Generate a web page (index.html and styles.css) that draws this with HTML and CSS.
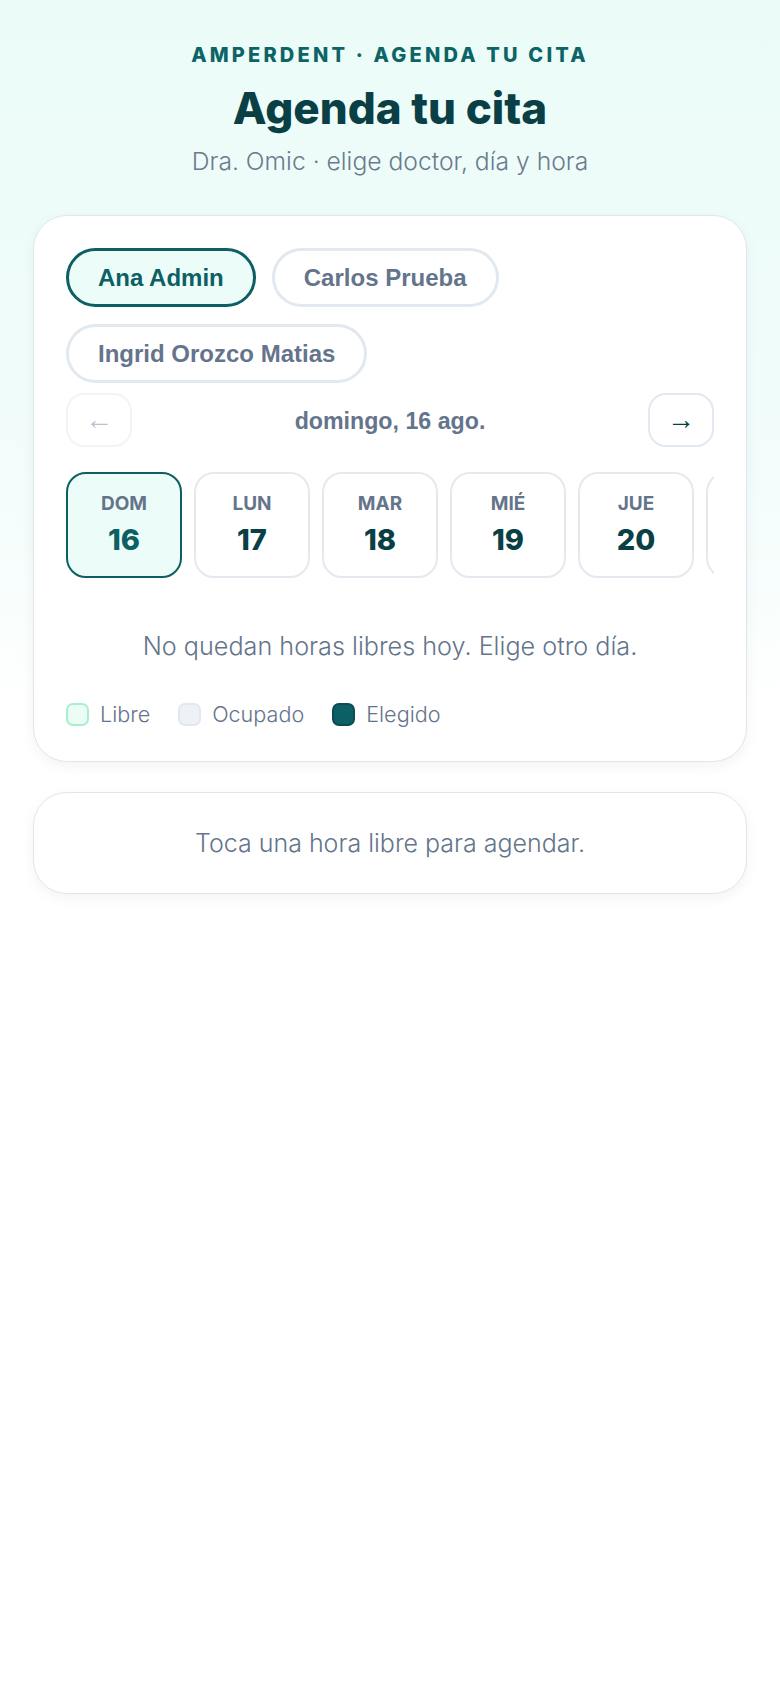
FILE: index.html
```html
<!DOCTYPE html>
<html lang="es">
<head>
<meta charset="utf-8">
<meta name="viewport" content="width=device-width, initial-scale=1">
<title>Agenda tu cita · Amperdent</title>
<link rel="stylesheet" href="styles.css">
</head>
<body>
<main class="page">
  <header class="hero">
    <p class="eyebrow">AMPERDENT · AGENDA TU CITA</p>
    <h1 class="title">Agenda tu cita</h1>
    <p class="subtitle">Dra. Omic · elige doctor, día y hora</p>
  </header>

  <section class="card booking">
    <div class="doctors">
      <button class="chip is-active" type="button">Ana Admin</button>
      <button class="chip" type="button">Carlos Prueba</button>
      <button class="chip" type="button">Ingrid Orozco Matias</button>
    </div>

    <div class="date-nav">
      <button class="nav-btn" type="button" disabled>←</button>
      <span class="date-label">domingo, 16 ago.</span>
      <button class="nav-btn nav-next" type="button">→</button>
    </div>

    <div class="days">
      <button class="day is-selected" type="button"><span class="day-name">DOM</span><span class="day-num">16</span></button>
      <button class="day" type="button"><span class="day-name">LUN</span><span class="day-num">17</span></button>
      <button class="day" type="button"><span class="day-name">MAR</span><span class="day-num">18</span></button>
      <button class="day" type="button"><span class="day-name">MIÉ</span><span class="day-num">19</span></button>
      <button class="day" type="button"><span class="day-name">JUE</span><span class="day-num">20</span></button>
      <button class="day" type="button"><span class="day-name">VIE</span><span class="day-num">21</span></button>
      <button class="day" type="button"><span class="day-name">SÁB</span><span class="day-num">22</span></button>
    </div>

    <p class="empty">No quedan horas libres hoy. Elige otro día.</p>

    <div class="legend">
      <span class="legend-item"><span class="swatch swatch-free"></span>Libre</span>
      <span class="legend-item"><span class="swatch swatch-busy"></span>Ocupado</span>
      <span class="legend-item"><span class="swatch swatch-picked"></span>Elegido</span>
    </div>
  </section>

  <section class="card hint">
    <p class="hint-text">Toca una hora libre para agendar.</p>
  </section>
</main>
</body>
</html>
```

FILE: styles.css
```css
* {
  box-sizing: border-box;
}

html,
body {
  margin: 0;
  padding: 0;
}

body {
  min-height: 100vh;
  background: linear-gradient(180deg, #ebfcf8 0%, #f3fdfb 30%, #ffffff 42%, #ffffff 100%);
  font-family: "Inter", "Noto Sans", sans-serif;
  color: #0b3d42;
}

.page {
  padding: 42px 33px 40px;
}

.hero {
  text-align: center;
}

.eyebrow {
  margin: 0;
  font-size: 20px;
  line-height: 26px;
  font-weight: 800;
  letter-spacing: 3.2px;
  color: #0d6466;
}

.title {
  margin: 15px 0 0;
  font-size: 44px;
  line-height: 50px;
  font-weight: 800;
  letter-spacing: 0;
  color: #093f45;
}

.subtitle {
  margin: 11px 0 0;
  font-size: 24.7px;
  line-height: 34px;
  font-weight: 300;
  color: #6b7a8d;
}

.card {
  background: #ffffff;
  border: 1px solid #e0e6ee;
  border-radius: 34px;
  box-shadow: 0 4px 14px rgba(15, 23, 42, 0.05);
}

.booking {
  margin-top: 37px;
  padding: 32px;
}

.doctors {
  display: flex;
  flex-wrap: wrap;
  gap: 17px 16px;
}

.chip {
  margin: 0;
  padding: 13px 29px;
  border: 3px solid #e2e8f0;
  border-radius: 999px;
  background: #ffffff;
  font-family: "Liberation Sans", Arial, sans-serif;
  font-size: 24px;
  line-height: 27px;
  font-weight: 700;
  color: #64748b;
}

.chip.is-active {
  border-color: #0d5f64;
  background: #ecfdf9;
  color: #0d5f64;
}

.date-nav {
  margin-top: 10px;
  display: flex;
  align-items: center;
  justify-content: space-between;
}

.nav-btn {
  width: 66px;
  height: 54px;
  padding: 0;
  border: 2px solid #e2e8f0;
  border-radius: 18px;
  background: #ffffff;
  font-family: "Liberation Sans", Arial, sans-serif;
  font-size: 28px;
  line-height: 1;
  color: #0b3d42;
}

.nav-btn:disabled {
  border-color: #f1f4f8;
  color: #b8c2cf;
}

.date-label {
  font-family: "Liberation Sans", Arial, sans-serif;
  font-size: 23.2px;
  font-weight: 700;
  color: #64748b;
  padding-top: 3px;
}

.days {
  margin-top: 25px;
  display: flex;
  gap: 12px;
  overflow: hidden;
}

.day {
  flex: 0 0 116px;
  display: flex;
  flex-direction: column;
  align-items: center;
  gap: 6px;
  margin: 0;
  padding: 18px 0;
  border: 2px solid #e5e9ef;
  border-radius: 20px;
  background: #ffffff;
  font-family: "Inter", "Noto Sans", sans-serif;
}

.day.is-selected {
  border-color: #0d5f64;
  background: #ecfdf9;
}

.day-name {
  font-size: 19px;
  line-height: 24px;
  font-weight: 700;
  color: #64748b;
}

.day-num {
  font-size: 29px;
  line-height: 36px;
  font-weight: 800;
  color: #093f45;
}

.day.is-selected .day-num {
  color: #0d5f64;
}

.empty {
  margin: 50px 0 0;
  text-align: center;
  font-size: 25.2px;
  line-height: 36px;
  font-weight: 300;
  color: #64748b;
}

.legend {
  margin-top: 35px;
  display: flex;
  align-items: center;
  gap: 28px;
}

.legend-item {
  display: flex;
  align-items: center;
  gap: 11px;
  font-size: 21.6px;
  line-height: 30px;
  font-weight: 300;
  color: #64748b;
}

.swatch {
  width: 23px;
  height: 23px;
  border-radius: 7px;
  border: 2px solid #e2e8f0;
}

.swatch-free {
  background: #ecfdf5;
  border-color: #a7efcf;
}

.swatch-busy {
  background: #eef2f7;
  border-color: #e2e8f0;
}

.swatch-picked {
  background: #0d5f66;
  border-color: #0a4c52;
}

.hint {
  margin-top: 30px;
  padding: 32px;
}

.hint-text {
  margin: 0;
  text-align: center;
  font-size: 25px;
  line-height: 36px;
  font-weight: 300;
  color: #64748b;
}
```
